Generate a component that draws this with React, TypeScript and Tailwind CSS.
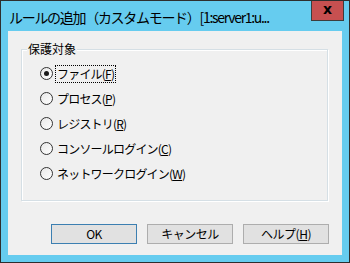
import React from "react";

const font = { fontFamily: '"Noto Sans CJK JP", "Noto Sans", sans-serif' };

function Radio({ checked, label, mnemonic, focused }: { checked?: boolean; label: string; mnemonic: string; focused?: boolean }) {
  return (
    <div className="flex h-[25px] items-center">
      <span className="flex h-[13px] w-[13px] items-center justify-center rounded-full border border-[#333333] bg-gradient-to-br from-[#e8e8e8] to-[#ffffff]">
        {checked && <span className="h-[5px] w-[5px] rounded-full bg-[#1a1a1a]" />}
      </span>
      <span
        className={`ml-[3px] flex h-[16px] items-center px-[1px] text-[12px] leading-[14px] tracking-[-0.8px] text-black ${focused ? "outline outline-1 outline-dotted outline-black" : ""}`}
      >
        {label}(<span className="underline underline-offset-[1px]">{mnemonic}</span>)
      </span>
    </div>
  );
}

function Btn({ children, primary }: { children: React.ReactNode; primary?: boolean }) {
  return (
    <div
      className={`flex h-[20px] w-[86px] items-center justify-center border bg-[#e1e1e1] text-[12px] leading-[14px] tracking-[-0.5px] text-black ${primary ? "border-[#3c7fb1]" : "border-[#adadad]"}`}
    >
      {children}
    </div>
  );
}

export default function App() {
  return (
    <div style={font} className="flex h-[263px] w-[350px] flex-col border border-[#2e2e2e] bg-[#66ccef]">
      <div className="flex h-[30px] items-start">
        <div className="ml-[8px] mt-[6px] text-[14px] leading-[20px] tracking-[-1.3px] text-black whitespace-nowrap">
          ルールの追加（カスタムモード）[1:server1:u...
        </div>
        <div className="ml-auto mr-[5px] flex h-[20px] w-[33px] items-center justify-center border border-t-0 border-[#3d3d3d] bg-[#c75050] pb-[3px] text-[14px] font-bold leading-none text-black" style={{ fontFamily: '"DejaVu Sans", sans-serif' }}>
          x
        </div>
      </div>
      <div className="ml-[7px] flex h-[224px] w-[334px] flex-col bg-[#f0f0f0]">
        <div className="relative ml-[13px] mt-[18px] h-[152px] w-[307px] border border-[#d5dfe5] shadow-[inset_1px_1px_0_#ffffff,1px_1px_0_#ffffff]">
          <span className="absolute left-[5px] top-[-9px] bg-[#f0f0f0] px-[1px] text-[12px] leading-[16px] text-black">
            保護対象
          </span>
          <div className="flex flex-col pl-[18px] pt-[11px]">
            <Radio checked focused label="ファイル" mnemonic="F" />
            <Radio label="プロセス" mnemonic="P" />
            <Radio label="レジストリ" mnemonic="R" />
            <Radio label="コンソールログイン" mnemonic="C" />
            <Radio label="ネットワークログイン" mnemonic="W" />
          </div>
        </div>
        <div className="ml-[43px] mt-[23px] flex gap-[10px]">
          <Btn primary>OK</Btn>
          <Btn>キャンセル</Btn>
          <Btn>
            ヘルプ(<span className="underline underline-offset-[1px]">H</span>)
          </Btn>
        </div>
      </div>
    </div>
  );
}
